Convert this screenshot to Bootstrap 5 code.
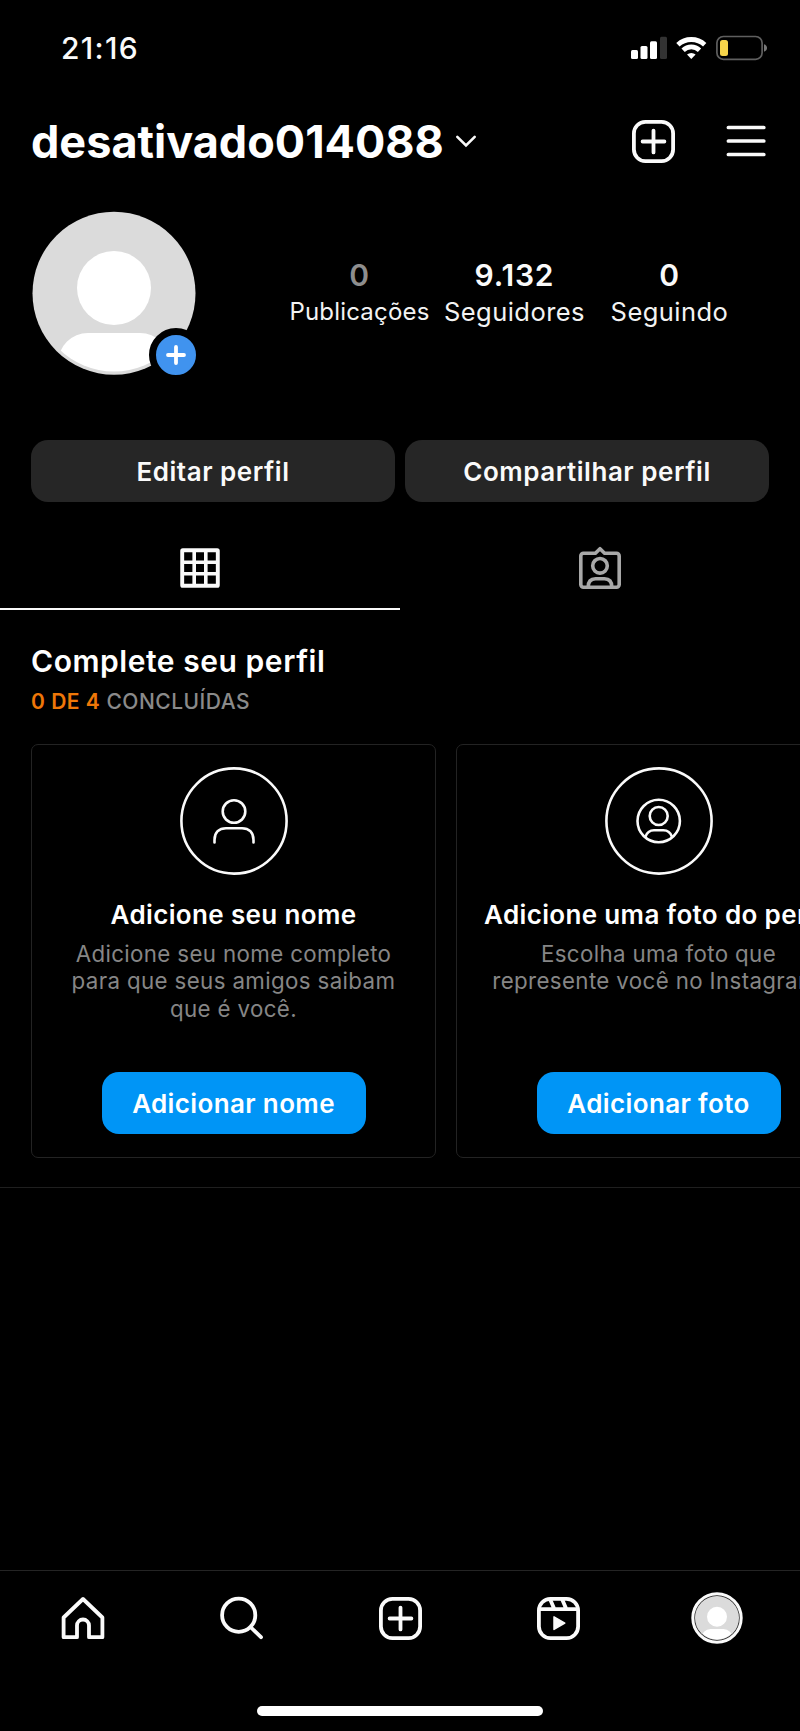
<!DOCTYPE html>
<html lang="pt-BR" data-bs-theme="dark">
<head>
<meta charset="utf-8">
<meta name="viewport" content="width=device-width, initial-scale=1">
<title>desativado014088</title>
<link rel="stylesheet" href="https://cdn.jsdelivr.net/npm/bootstrap@5.3.0/dist/css/bootstrap.min.css">
<style>
  body { background: #000; color: #fafafa; font-family: Inter, "Liberation Sans", sans-serif; }
  .screen { width: 800px; height: 1731px; overflow: hidden; }
  svg { display: block; flex: none; }
  .statusbar { height: 96px; padding: 0 33px 0 61px; }
  .clock { font-size: 30px; font-weight: 500; line-height: 36px; letter-spacing: 1.3px; }
  .topbar { height: 90px; padding: 0 34px 0 31px; }
  .username { font-size: 45px; font-weight: 700; line-height: 54px; margin: 1px 0 0; }
  .menu-icon { margin-left: 51px; }
  .profile { height: 254px; padding: 25px 53px 0 32px; }
  .avatar { width: 164px; height: 164px; }
  .add-story { right: -7px; bottom: -7px; width: 54px; height: 54px; border: 7px solid #000; background: #4093ef; }
  .stats { width: 465px; padding-top: 46px; }
  .stat-num { font-size: 30px; font-weight: 600; line-height: 36px; letter-spacing: .8px; }
  .stat-num.empty { color: #8e8e8e; }
  .stat-label { font-size: 25.5px; line-height: 37px; letter-spacing: .45px; color: #f3f3f3; white-space: nowrap; }
  .stat-label.narrow { font-size: 24px; letter-spacing: .2px; }
  .actions { padding: 0 31px; gap: 10px; height: 62px; }
  .btn-dim, .btn-blue { --bs-btn-border-width: 0; --bs-btn-font-weight: 600; --bs-btn-font-size: 26px; --bs-btn-line-height: 61px; --bs-btn-padding-y: 0; --bs-btn-border-radius: 17px; height: 62px; padding-top: 1px; }
  .btn-dim { --bs-btn-bg: #262626; --bs-btn-color: #fafafa; letter-spacing: .53px; }
  .btn-blue { --bs-btn-bg: #0095f6; --bs-btn-color: #fff; --bs-btn-padding-x: 0; letter-spacing: .37px; }
  .btn-name { width: 264px; }
  .btn-photo { width: 244px; }
  .tabs { height: 108px; }
  .tabs > div { border-bottom: 2px solid transparent; padding-top: 25px; }
  .tabs > .current { border-color: #fafafa; }
  .complete-head { padding: 31px 31px 0; height: 134px; }
  .complete-title { font-size: 30px; font-weight: 600; line-height: 40px; letter-spacing: .55px; margin: 0; }
  .complete-sub { font-size: 21px; font-weight: 500; line-height: 41px; letter-spacing: .5px; color: #8a8a8a; white-space: nowrap; }
  .complete-sub b { color: #ef7708; font-weight: 600; }
  .tasks { padding: 0 31px 29px; gap: 20px; height: 444px; border-bottom: 1px solid #1f1f1f; overflow: hidden; }
  .task { flex: none; width: 405px; height: 414px; border: 1px solid #232323; border-radius: 7px; padding: 22px 0 0; white-space: nowrap; }
  .task-title { font-size: 26px; font-weight: 600; line-height: 32px; letter-spacing: .35px; margin: 24px 0 0; }
  .task-text { font-size: 22.300px; line-height: 27.4px; letter-spacing: .37px; color: #868686; margin: 9px 0 0; height: 132px; }
  .bottomnav { margin-top: 382px; height: 162px; border-top: 1px solid #242424; padding: 21px 4px 0; }
  .bottomnav > div { height: 52px; }
  .homebar { width: 286px; height: 10px; left: 257px; bottom: 15px; background: #fff; }
</style>
</head>
<body>
<main class="screen position-relative">

  <div class="statusbar d-flex align-items-center justify-content-between">
    <span class="clock">21:16</span>
    <div class="d-flex align-items-center">
      <svg width="36" height="24" viewBox="0 0 36 24"><g fill="#fff"><rect y="14" width="7" height="9" rx="1.5"/><rect x="9.5" y="10" width="7" height="13" rx="1.5"/><rect x="19" y="5.3" width="7" height="17.7" rx="1.5"/></g><rect x="29" y=".7" width="7" height="22.3" rx="1.5" fill="#333"/></svg>
      <svg class="ms-2 me-2" width="33" height="24" viewBox="-1 0 33 24"><g fill="none" stroke="#fff" stroke-width="4.8"><path d="M1.9 8.8A19.6 19.6 0 0 1 28.7 8.8"/><path d="M7.1 14.2A12 12 0 0 1 23.5 14.2"/></g><path d="M15.3 23L11 18.6A6.3 6.3 0 0 1 19.6 18.6Z" fill="#fff"/></svg>
      <svg width="51" height="26" viewBox="0 0 51 26"><rect x=".9" y="1.5" width="45.2" height="22.8" rx="6.5" fill="none" stroke="#5f5f5f" stroke-width="1.7"/><rect x="4" y="5" width="8" height="16" rx="2.5" fill="#f7d54a"/><path d="M48 9.3q3 1 3 3.7t-3 3.7z" fill="#777"/></svg>
    </div>
  </div>

  <header class="topbar d-flex align-items-center">
    <h1 class="username">desativado014088</h1>
    <svg class="ms-2" width="30" height="20" viewBox="0 0 30 20"><path d="M5.3 5.8L14 14.5L22.7 5.8" fill="none" stroke="#fafafa" stroke-width="2.6" stroke-linecap="round"/></svg>
    <svg class="ms-auto" width="43" height="43" viewBox="0 0 43 43" fill="none" stroke="#fafafa" stroke-width="3.8" stroke-linecap="round"><rect x="1.9" y="1.9" width="39.2" height="39.2" rx="11.5"/><path d="M10.6 21.5h21.8M21.5 10.6v21.8"/></svg>
    <svg class="menu-icon" width="40" height="34" viewBox="0 0 40 34" stroke="#fafafa" stroke-width="3.7" stroke-linecap="round"><path d="M2.4 3.5h35.4M2.4 17h35.4M2.4 30.5h35.4"/></svg>
  </header>

  <section class="profile d-flex justify-content-between">
    <div class="avatar position-relative">
      <svg width="164" height="164" viewBox="0 0 164 164"><defs><clipPath id="face"><circle cx="82" cy="82" r="78.6"/></clipPath></defs><circle cx="82" cy="82.300" r="81.500" fill="#dbdbdb"/><circle cx="82" cy="77" r="37" fill="#fff"/><g clip-path="url(#face)"><rect x="26" y="122" width="112" height="80" rx="30" fill="#fff"/></g></svg>
      <div class="add-story position-absolute rounded-circle d-flex align-items-center justify-content-center">
        <svg width="20" height="20" viewBox="0 0 20 20"><path d="M2 10h16M10 2v16" stroke="#fff" stroke-width="3.8" stroke-linecap="round"/></svg>
      </div>
    </div>
    <div class="stats row g-0 text-center align-content-start">
      <div class="col-4"><div class="stat-num empty">0</div><div class="stat-label narrow">Publicações</div></div>
      <div class="col-4"><div class="stat-num">9.132</div><div class="stat-label">Seguidores</div></div>
      <div class="col-4"><div class="stat-num">0</div><div class="stat-label">Seguindo</div></div>
    </div>
  </section>

  <div class="actions d-flex">
    <button class="btn btn-dim flex-fill w-50">Editar perfil</button>
    <button class="btn btn-dim flex-fill w-50">Compartilhar perfil</button>
  </div>

  <nav class="tabs d-flex">
    <div class="w-50 current d-flex justify-content-center align-items-center">
      <svg width="40" height="40" viewBox="0 0 40 40" fill="none" stroke="#fafafa"><rect x="2.200" y="2.200" width="35.600" height="35.600" rx=".6" stroke-width="3.900"/><path d="M14.200 2v36M25.800 2v36M2 14.200h36M2 25.800h36" stroke-width="3.600"/></svg>
    </div>
    <div class="w-50 d-flex justify-content-center align-items-center">
      <svg width="44" height="44" viewBox="0 0 44 44" fill="none" stroke="#a8a8a8" stroke-width="3.6" stroke-linejoin="round"><path d="M5.5 7.300H17.4L22 2.700L26.6 7.300H38.5a2.7 2.7 0 0 1 2.7 2.7V38.500a2.7 2.7 0 0 1-2.7 2.7H5.5A2.7 2.7 0 0 1 2.8 38.500V10a2.7 2.7 0 0 1 2.7-2.7Z"/><circle cx="22" cy="19.800" r="7.3"/><path d="M10.200 41c0-5.500 2.800-8.300 7.300-8.300h9c4.500 0 7.300 2.800 7.300 8.300"/></svg>
    </div>
  </nav>

  <div class="complete-head">
    <h2 class="complete-title">Complete seu perfil</h2>
    <div class="complete-sub"><b>0 DE 4</b> CONCLUÍDAS</div>
  </div>

  <section class="tasks d-flex">
    <article class="task text-center d-flex flex-column align-items-center">
      <svg width="108" height="108" viewBox="0 0 108 108" fill="none" stroke="#fafafa" stroke-width="2.600"><circle cx="54" cy="54" r="52.600"/><circle cx="54" cy="44.500" r="11.300"/><path d="M34.500 75.500v-2.500c0-7.500 4.500-11.800 11.500-11.800h16c7 0 11.500 4.300 11.500 11.800v2.500" stroke-linecap="round"/></svg>
      <h3 class="task-title">Adicione seu nome</h3>
      <p class="task-text">Adicione seu nome completo<br>para que seus amigos saibam<br>que é você.</p>
      <button class="btn btn-blue btn-name">Adicionar nome</button>
    </article>
    <article class="task text-center d-flex flex-column align-items-center">
      <svg width="108" height="108" viewBox="0 0 108 108" fill="none" stroke="#fafafa" stroke-width="2.600"><circle cx="54" cy="54" r="52.600"/><circle cx="53.700" cy="54" r="21.200"/><circle cx="53.700" cy="49" r="9"/><path d="M40.300 70c1.500-4.300 4.500-6.700 8.700-6.700h9.400c4.200 0 7.200 2.400 8.700 6.700"/></svg>
      <h3 class="task-title">Adicione uma foto do perfil</h3>
      <p class="task-text">Escolha uma foto que<br>represente você no Instagram.</p>
      <button class="btn btn-blue btn-photo">Adicionar foto</button>
    </article>
  </section>

  <nav class="bottomnav d-flex">
    <div class="flex-fill w-25 d-flex justify-content-center align-items-center">
      <svg width="44" height="44" viewBox="0 0 44 44" fill="none" stroke="#fafafa" stroke-width="3.800" stroke-linejoin="round"><path d="M22 3L41.400 21.500V41.200H28V29.500a6 6 0 0 0-12 0V41.200H2.600V21.500Z"/></svg>
    </div>
    <div class="flex-fill w-25 d-flex justify-content-center align-items-center">
      <svg width="44" height="44" viewBox="0 0 44 44" fill="none" stroke="#fafafa" stroke-width="3.800" stroke-linecap="round"><circle cx="18.700" cy="19.200" r="16.600"/><path d="M31 31.500L41 41.200"/></svg>
    </div>
    <div class="flex-fill w-25 d-flex justify-content-center align-items-center">
      <svg width="43" height="43" viewBox="0 0 43 43" fill="none" stroke="#fafafa" stroke-width="3.800" stroke-linecap="round"><rect x="1.900" y="1.900" width="39.200" height="39.200" rx="11.500"/><path d="M10.600 21.500h21.800M21.500 10.600v21.800"/></svg>
    </div>
    <div class="flex-fill w-25 d-flex justify-content-center align-items-center">
      <svg width="43" height="43" viewBox="0 0 43 43" fill="none" stroke="#fafafa" stroke-width="3.800"><rect x="1.900" y="1.900" width="39.200" height="39.200" rx="11.500"/><path d="M2 12.200h39M13 2l4.300 10M25 2l4.300 10"/><path d="M17 19.800v12.600l10.800-6.300z" fill="#fafafa" stroke-width="1.500" stroke-linejoin="round"/></svg>
    </div>
    <div class="flex-fill w-25 d-flex justify-content-center align-items-center">
      <svg width="52" height="52" viewBox="0 0 52 52"><defs><clipPath id="mini"><circle cx="26" cy="26" r="21.300"/></clipPath></defs><circle cx="26" cy="26" r="24.200" fill="#222" stroke="#fafafa" stroke-width="3"/><circle cx="26" cy="26" r="22" fill="#dbdbdb"/><circle cx="26" cy="24.700" r="10" fill="#fff"/><g clip-path="url(#mini)"><rect x="10.500" y="37" width="31" height="20" rx="9" fill="#fff"/></g></svg>
    </div>
  </nav>

  <div class="homebar position-absolute rounded-pill"></div>
</main>
<script src="https://cdn.jsdelivr.net/npm/bootstrap@5.3.0/dist/js/bootstrap.bundle.min.js"></script>
</body>
</html>
